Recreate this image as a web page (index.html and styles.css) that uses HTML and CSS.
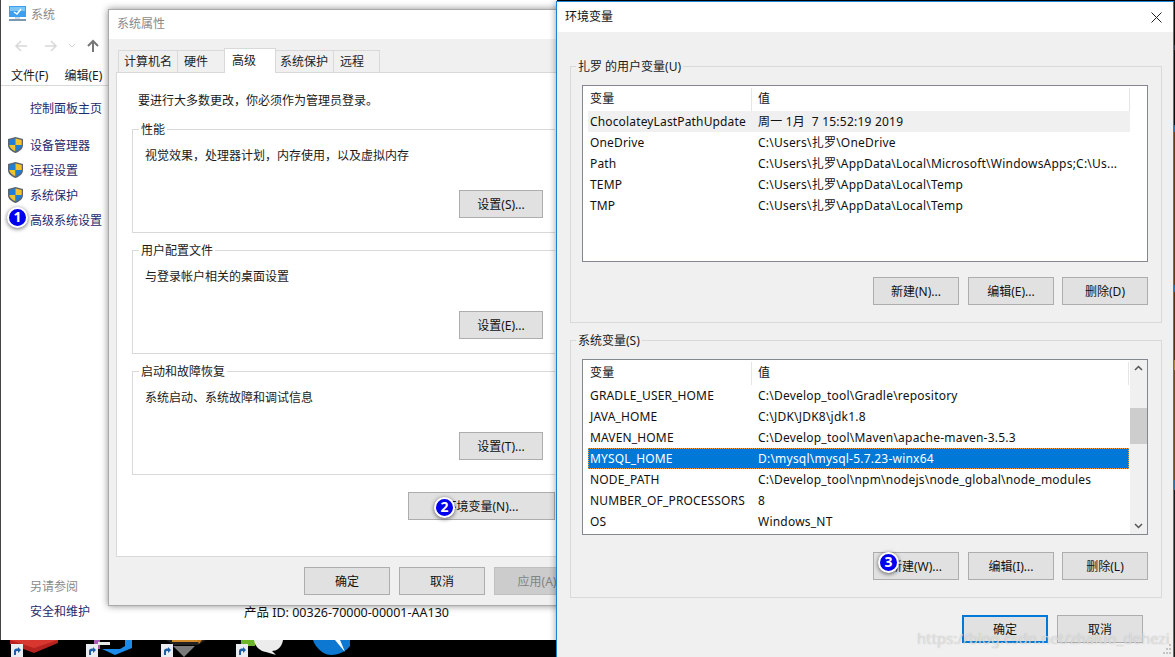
FILE: index.html
```html
<!DOCTYPE html>
<html lang="zh-CN">
<head>
<meta charset="utf-8">
<title>环境变量</title>
<link rel="stylesheet" href="styles.css">
</head>
<body>
<div class="desktop">
  <div class="edge"></div>
  <svg class="taskbar" width="556" height="17" viewBox="0 0 556 17">
    <path d="M10 0H58V3L34 13 10 4Z" fill="#b5221f"/><path d="M10 0H58L34 8Z" fill="#d8372f"/>
    <path d="M94 0H100V9H94Z" fill="#b05ab8"/><path d="M98 2H110V5H98Z" fill="#e8e8e8"/>
    <path d="M125 0H132V8L115 15 102 9H120L125 6Z" fill="#1c8ae8"/>
    <path d="M166 0H206L198 5H174Z" fill="#222"/><path d="M172 0H198V2H172Z" fill="#d08a2a"/><path d="M197 0H202L199 4Z" fill="#c9781e"/>
    <path d="M173 6H195L184 17Z" fill="#7a7a7a"/>
    <path d="M241 0H255V6H241Z" fill="#6cb52d"/>
    <path d="M254 0H283C282 8 276 11 272 11L276 15 266 12C260 11 255 7 254 0Z" fill="#ececec"/>
    <path d="M313 0H350V6C344 14 330 18 322 12 317 8 314 4 313 0Z" fill="#0c78d2"/>
    <path d="M335 0L345 12 340 0Z" fill="#fff"/>
    <g id="lnk"><rect x="11" y="4" width="12" height="13" fill="#e9edf2"/><path d="M14 15V11Q14 8.500 17 8.500H18V7L21 10 18 13V11H17Q16 11 16 12V15Z" fill="#1c5fa8"/></g>
    <use href="#lnk" x="75"/><use href="#lnk" x="150"/><use href="#lnk" x="225"/>
  </svg>

  <section class="win-system">
    <header class="sys-title">
      <svg class="sys-icon" width="17" height="16" viewBox="0 0 17 16"><rect x="0" y="0" width="17" height="11" fill="#3c9ff0"/><rect x="1" y="1" width="15" height="4" fill="#7cc6f7"/><path d="M5 6l3 2 4-5" stroke="#fff" stroke-width="1.500" fill="none"/><rect x="6" y="11" width="5" height="2" fill="#c8dbe6"/><rect x="0" y="13" width="17" height="2" fill="#7d98ad"/></svg>
      <span>系统</span>
    </header>
    <nav class="sys-nav">
      <svg width="14" height="14" viewBox="0 0 14 14"><path d="M13 7H2M7 2L2 7l5 5" stroke="#d8d8d8" stroke-width="1.500" fill="none"/></svg>
      <svg width="14" height="14" viewBox="0 0 14 14"><path d="M1 7h11M7 2l5 5-5 5" stroke="#d8d8d8" stroke-width="1.500" fill="none"/></svg>
      <svg class="nav-chev" width="8" height="6" viewBox="0 0 8 6"><path d="M1 1l3 3 3-3" stroke="#d4d4d4" fill="none"/></svg>
      <svg width="14" height="14" viewBox="0 0 14 14"><path d="M7 13V2M2 7l5-5 5 5" stroke="#777" stroke-width="2" fill="none"/></svg>
    </nav>
    <div class="sys-menu"><span>文件(F)</span><span>编辑(E)</span></div>
    <aside class="sys-side">
      <a class="side-home">控制面板主页</a>
      <ul class="side-list">
        <li><svg class="shield" viewBox="0 0 15 16"><use href="#shield"/></svg>设备管理器</li>
        <li><svg class="shield" viewBox="0 0 15 16"><use href="#shield"/></svg>远程设置</li>
        <li><svg class="shield" viewBox="0 0 15 16"><use href="#shield"/></svg>系统保护</li>
        <li><span class="shield"></span>高级系统设置</li>
      </ul>
      <div class="side-see">
        <div class="see-head">另请参阅</div>
        <a>安全和维护</a>
      </div>
    </aside>
    <div class="product">产品 ID: 00326-70000-00001-AA130</div>
  </section>

  <section class="win-props">
    <header class="dlg-title dlg-title-dim">系统属性</header>
    <div class="props-body">
      <div class="tabs">
        <span class="tab tab-a">计算机名</span>
        <span class="tab tab-b">硬件</span>
        <span class="tab tab-active">高级</span>
        <span class="tab tab-c">系统保护</span>
        <span class="tab tab-d">远程</span>
      </div>
      <div class="panel">
        <p class="panel-note">要进行大多数更改，你必须作为管理员登录。</p>
        <fieldset class="pgroup">
          <legend>性能</legend>
          <p>视觉效果，处理器计划，内存使用，以及虚拟内存</p>
          <button class="btn btn-set">设置(S)...</button>
        </fieldset>
        <fieldset class="pgroup">
          <legend>用户配置文件</legend>
          <p>与登录帐户相关的桌面设置</p>
          <button class="btn btn-set">设置(E)...</button>
        </fieldset>
        <fieldset class="pgroup">
          <legend>启动和故障恢复</legend>
          <p>系统启动、系统故障和调试信息</p>
          <button class="btn btn-set">设置(T)...</button>
        </fieldset>
        <button class="btn btn-env">环境变量(N)...</button>
      </div>
      <div class="props-foot">
        <button class="btn btn-foot">确定</button>
        <button class="btn btn-foot">取消</button>
        <button class="btn btn-foot btn-off">应用(A)</button>
      </div>
    </div>
  </section>

  <section class="win-env">
    <header class="dlg-title">环境变量
      <svg class="close" width="11" height="11" viewBox="0 0 11 11"><path d="M.5.5l10 10M10.500.5l-10 10" stroke="#222" stroke-width="1" fill="none"/></svg>
    </header>
    <div class="env-body">
      <fieldset class="egroup egroup-user">
        <legend>扎罗 的用户变量(U)</legend>
        <div class="list list-user">
          <div class="list-main">
            <div class="row row-head"><span class="c1">变量</span><span class="c2">值</span></div>
            <div class="row row-hover"><span class="c1">ChocolateyLastPathUpdate</span><span class="c2">周一 1月  7 15:52:19 2019</span></div>
            <div class="row"><span class="c1">OneDrive</span><span class="c2">C:\Users\扎罗\OneDrive</span></div>
            <div class="row"><span class="c1">Path</span><span class="c2">C:\Users\扎罗\AppData\Local\Microsoft\WindowsApps;C:\Us...</span></div>
            <div class="row"><span class="c1">TEMP</span><span class="c2">C:\Users\扎罗\AppData\Local\Temp</span></div>
            <div class="row"><span class="c1">TMP</span><span class="c2">C:\Users\扎罗\AppData\Local\Temp</span></div>
          </div>
        </div>
        <div class="actions">
          <button class="btn btn-act">新建(N)...</button>
          <button class="btn btn-act">编辑(E)...</button>
          <button class="btn btn-act">删除(D)</button>
        </div>
      </fieldset>
      <fieldset class="egroup egroup-sys">
        <legend>系统变量(S)</legend>
        <div class="list list-sys">
          <div class="list-main">
            <div class="row row-head"><span class="c1">变量</span><span class="c2">值</span></div>
            <div class="row"><span class="c1">GRADLE_USER_HOME</span><span class="c2">C:\Develop_tool\Gradle\repository</span></div>
            <div class="row"><span class="c1">JAVA_HOME</span><span class="c2">C:\JDK\JDK8\jdk1.8</span></div>
            <div class="row"><span class="c1">MAVEN_HOME</span><span class="c2">C:\Develop_tool\Maven\apache-maven-3.5.3</span></div>
            <div class="row row-sel"><span class="c1">MYSQL_HOME</span><span class="c2">D:\mysql\mysql-5.7.23-winx64</span></div>
            <div class="row"><span class="c1">NODE_PATH</span><span class="c2">C:\Develop_tool\npm\nodejs\node_global\node_modules</span></div>
            <div class="row"><span class="c1">NUMBER_OF_PROCESSORS</span><span class="c2">8</span></div>
            <div class="row"><span class="c1">OS</span><span class="c2">Windows_NT</span></div>
          </div>
          <div class="scroll">
            <svg width="17" height="17" viewBox="0 0 17 17"><path d="M5 10l3.500-3.500L12 10" stroke="#555" stroke-width="1.500" fill="none"/></svg>
            <div class="track"><div class="thumb"></div></div>
            <svg width="17" height="17" viewBox="0 0 17 17"><path d="M5 7l3.500 3.500L12 7" stroke="#555" stroke-width="1.500" fill="none"/></svg>
          </div>
        </div>
        <div class="actions">
          <button class="btn btn-act">新建(W)...</button>
          <button class="btn btn-act">编辑(I)...</button>
          <button class="btn btn-act">删除(L)</button>
        </div>
      </fieldset>
      <div class="env-foot">
        <button class="btn btn-act btn-default">确定</button>
        <button class="btn btn-act">取消</button>
      </div>
    </div>
    <svg class="grip" width="10" height="14" viewBox="0 0 10 14"><path d="M7 2h2v2H7zM4 6h2v2H4zM7 6h2v2H7zM1 10h2v2H1zM4 10h2v2H4zM7 10h2v2H7z" fill="#c4c4c4"/></svg>
  </section>

  <span class="badge badge-1">1</span>
  <span class="badge badge-2">2</span>
  <span class="badge badge-3">3</span>
  <div class="watermark">https://blog.csdn.net/zhaluo_dehezi</div>

  <svg class="defs" width="0" height="0"><defs><g id="shield"><path d="M7.500 0L15 2v6c0 4-3.500 6.500-7.500 8C3.500 14.500 0 12 0 8V2z" fill="#5a6470"/><path d="M7.500 1.500V8H1.300V3z" fill="#1f7fd6"/><path d="M7.500 1.500L13.700 3v5H7.500z" fill="#f4c22e"/><path d="M1.300 8h6.200v6.300C4.500 13 1.600 11 1.300 8z" fill="#f4c22e"/><path d="M13.700 8H7.500v6.300c3-1.300 5.900-3.300 6.200-6.300z" fill="#1f7fd6"/></g></defs></svg>
</div>
</body>
</html>
```
FILE: styles.css
```css
* { box-sizing: border-box; }
html, body { margin: 0; padding: 0; }
body {
  width: 1175px;
  height: 657px;
  overflow: hidden;
  font-family: "Noto Sans", "Noto Sans CJK SC", sans-serif;
  font-size: 12px;
  color: #1a1a1a;
  background: #000;
}
.desktop { position: relative; width: 1175px; height: 657px; overflow: hidden; background: #000; }
.defs { position: absolute; }
.edge { position: absolute; left: 1174px; top: 0; width: 1px; height: 657px; background: linear-gradient(#111 0 45px, #345 45px 50px, #111 50px 125px, #38c 125px 132px, #7a4a20 132px 285px, #38c 285px 292px, #6a3a18 292px 360px, #d8a040 360px 370px, #8a5a28 370px 480px, #38c 480px 490px, #222 490px); }

/* desktop strip */
.taskbar { position: absolute; left: 0; top: 640px; display: block; }

/* system window */
.win-system { position: absolute; left: 0; top: 0; width: 557px; height: 640px; background: #fff; border-left: 1px solid #444; }
.sys-title { display: flex; align-items: center; gap: 5px; height: 28px; padding-left: 8px; color: #8a8a8a; }
.sys-nav { display: flex; align-items: center; gap: 16px; height: 36px; padding-left: 13px; }
.nav-chev { margin: 0 -6px 0 -6px; }
.sys-menu { display: flex; gap: 16px; height: 22px; padding-left: 10px; border-bottom: 1px solid #d9d9d9; align-items: center; }
.sys-side { display: flex; flex-direction: column; height: 554px; padding-left: 7px; color: #1f2a6b; }
.side-home { margin: 13px 0 0 22px; line-height: 20px; }
.side-list { list-style: none; margin: 13px 0 0; padding: 0; }
.side-list li { display: flex; align-items: center; gap: 7px; height: 25px; white-space: nowrap; }
.shield { display: block; width: 15px; height: 16px; flex: none; }
.side-see { margin: auto 0 20px 22px; }
.see-head { color: #8a8a8a; margin-bottom: 8px; line-height: 17px; }
.side-see a { line-height: 17px; }
.product { position: absolute; left: 243px; top: 604px; color: #111; font-size: 12.5px; line-height: 18px; }

/* dialogs */
.win-props { position: absolute; left: 108px; top: 9px; width: 488px; height: 597px; background: #f0f0f0; box-shadow: 0 0 7px rgba(0,0,0,.45); border: 1px solid #aaa; border-right: 0; }
.dlg-title { position: relative; height: 30px; line-height: 29px; padding-left: 8px; background: #fff; color: #111; font-size: 12px; }
.win-props .dlg-title { height: 29px; line-height: 27px; }
.dlg-title-dim { color: #8a8a8a; }
.props-body { background: #f0f0f0; padding: 11px 7px 0; }
.tabs { position: relative; display: flex; align-items: flex-end; height: 22px; padding-left: 3px; }
.tab { display: block; height: 22px; line-height: 21px; background: #f0f0f0; border: 1px solid #d9d9d9; border-bottom: 0; margin-left: -1px; color: #222; }
.tab-a { width: 60px; padding-left: 5px; }
.tab-b { width: 48px; padding-left: 6px; }
.tab-active { position: relative; z-index: 1; width: 52px; height: 25px; line-height: 23px; background: #fff; padding-left: 7px; margin-bottom: -1px; }
.tab-c { width: 59px; padding-left: 4px; }
.tab-d { width: 47px; padding-left: 6px; }
.panel { height: 485px; width: 472px; background: #fff; border: 1px solid #d9d9d9; padding: 19px 15px 0; }
.panel-note { margin: 0 0 11px 6px; line-height: 18px; }
.pgroup { margin: 0 0 9px; padding: 0 12px 0 12px; width: 423px; height: 112px; border: 1px solid #d9d9d9; border-right: 0; min-width: 0; }
.pgroup legend { padding: 1px 2px 0; margin-left: -6px; line-height: 16px; }
.pgroup p { margin: 9px 0 0; line-height: 18px; }
.pgroup .btn-set { display: block; margin: 25px 0 0 auto; }
.btn { display: block; font: inherit; color: #111; background: #e1e1e1; border: 1px solid #adadad; padding: 0; margin: 0; text-align: center; white-space: nowrap; border-radius: 0; }
.btn-set { width: 84px; height: 28px; }
.btn-env { width: 147px; height: 28px; margin: 17px 0 0 276px; }
.props-foot { display: flex; gap: 9px; padding: 10px 0 0 188px; }
.btn-foot { width: 86px; height: 28px; flex: none; }
.btn-off { color: #838383; background: #ccc; border-color: #bfbfbf; }

.win-env { position: absolute; left: 556px; top: 1px; width: 618px; height: 656px; background: #f0f0f0; border: 1px solid #1883d7; border-bottom: 0; box-shadow: 0 0 7px rgba(0,0,0,.4); }
.close { position: absolute; right: 11px; top: 10px; }
.env-body { padding: 26px 13px 0 13px; }
.egroup { margin: 0; padding: 0 13px 0 11px; min-width: 0; border: 1px solid #d9d9d9; width: 592px; }
.egroup legend { padding: 1px 2px 0; margin-left: -6px; line-height: 16px; }
.egroup-user { height: 265px; margin-bottom: 9px; }
.egroup-sys { height: 266px; margin-bottom: 17px; }
.list { display: flex; width: 566px; background: #fff; border: 1px solid #828790; margin-top: 10px; overflow: hidden; }
.list-user { height: 177px; }
.list-sys { height: 176px; }
.list-main { flex: 1; min-width: 0; padding: 2px 1px 0 5px; }
.list-user .list-main { padding-right: 17px; }
.row { display: flex; height: 21px; line-height: 21px; white-space: pre; color: #111; }
.row-head { height: 23px; line-height: 22px; }
.row-head .c1 { border-right: 1px solid #e5e5e5; }
.row-head .c2 { flex: 1; border-right: 1px solid #e5e5e5; }
.c1 { display: block; width: 164px; padding-left: 2px; flex: none; overflow: hidden; letter-spacing: .15px; }
.c2 { display: block; padding-left: 6px; overflow: hidden; letter-spacing: .22px; }
.row-hover { background: #f0f0f0; }
.row-sel { background: #0078d7; color: #fff; outline: 1px dotted #e8a04c; outline-offset: -1px; }
.scroll { width: 17px; flex: none; display: flex; flex-direction: column; background: #f0f0f0; }
.scroll svg { display: block; flex: none; }
.track { flex: 1; padding-top: 31px; }
.thumb { height: 36px; background: #cdcdcd; }
.actions { display: flex; justify-content: flex-end; gap: 8px; margin-top: 15px; width: 566px; }
.list-sys + .actions { margin-top: 17px; }
.actions .btn-act:first-child { margin-right: 1px; }
.btn-act { width: 86px; height: 28px; flex: none; }
.env-foot { display: flex; gap: 9px; padding-left: 392px; }
.btn-default { border: 2px solid #0078d7; }
.grip { position: absolute; right: 1px; bottom: 1px; }

/* annotations */
.badge { position: absolute; width: 21px; height: 21px; line-height: 16px; text-align: center; border-radius: 50%; background: #0000f0; border: 2px solid #fff; box-shadow: 0 1px 4px rgba(0,0,0,.6); color: #fff; font-family: "Noto Sans", sans-serif; font-weight: 700; font-size: 14px; }
.badge-1 { left: 7px; top: 207px; }
.badge-2 { left: 434px; top: 497px; }
.badge-3 { left: 878px; top: 552px; }
.watermark { position: absolute; left: 917px; top: 628px; font-family: "Noto Sans", sans-serif; font-size: 15px; line-height: 20px; color: rgba(255,255,255,.6); white-space: nowrap; text-shadow: 0 0 1px rgba(120,120,120,.6); }
```
